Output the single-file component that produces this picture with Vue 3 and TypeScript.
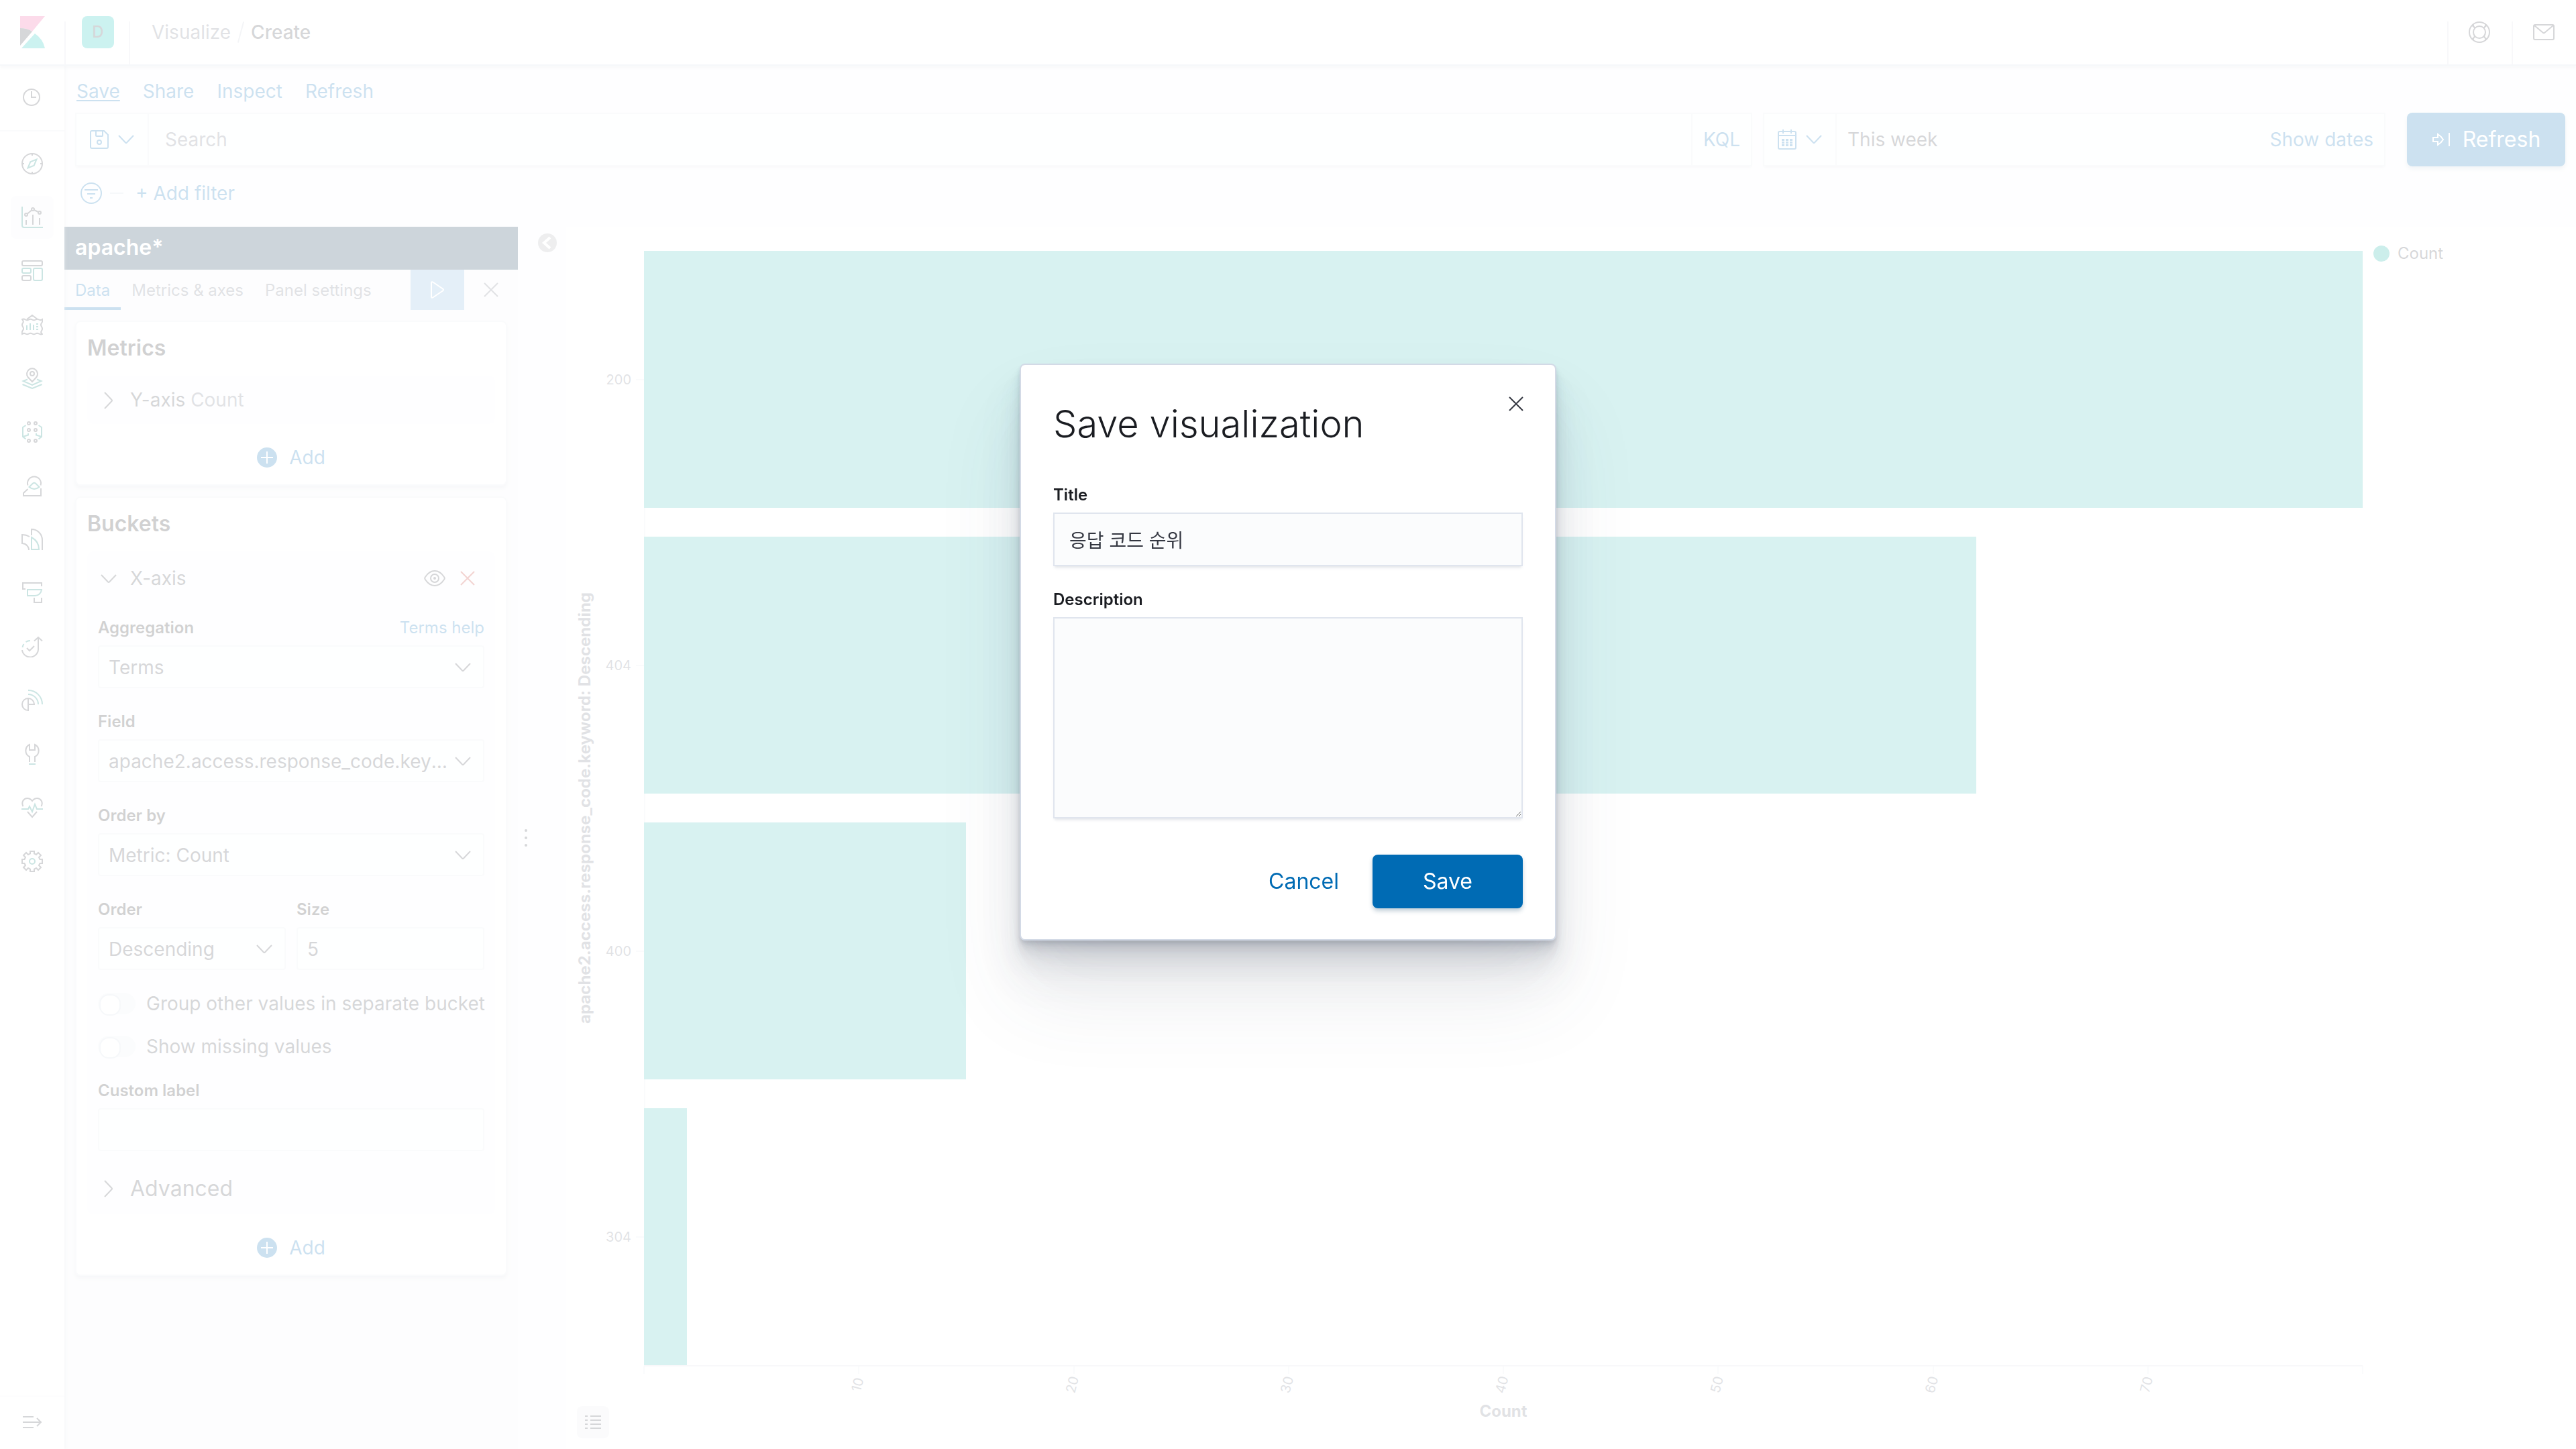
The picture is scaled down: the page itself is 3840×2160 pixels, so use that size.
<script setup lang="ts">
import { ref } from 'vue'

interface NavIcon {
  label: string
  main: string
  accent: string
}

interface Bucket {
  code: string
  count: number
}

const navItems: NavIcon[] = [
  {
    label: 'Discover',
    main: 'M16 1a15 15 0 1 0 0 30a15 15 0 1 0 0-30M16 1v3M16 28v3M1 16h3M28 16h3',
    accent: 'M9.5 22.5L13.3 13.3L22.5 9.5L18.7 18.7Z',
  },
  {
    label: 'Visualize',
    main: 'M7 20v7M17 12v15M27 17v10M9 10.5L15 5.5M19 5L25 8M7 10a2 2 0 1 0 0 4a2 2 0 1 0 0-4M17 2a2 2 0 1 0 0 4a2 2 0 1 0 0-4M27 7a2 2 0 1 0 0 4a2 2 0 1 0 0-4',
    accent: 'M1 0V28A3 3 0 0 0 4 31H32',
  },
  {
    label: 'Dashboard',
    main: 'M3 1H29A2 2 0 0 1 31 3V6A2 2 0 0 1 29 8H3A2 2 0 0 1 1 6V3A2 2 0 0 1 3 1ZM3 23H12A2 2 0 0 1 14 25V28A2 2 0 0 1 12 30H3A2 2 0 0 1 1 28V25A2 2 0 0 1 3 23Z',
    accent: 'M3 12H12A2 2 0 0 1 14 14V17A2 2 0 0 1 12 19H3A2 2 0 0 1 1 17V14A2 2 0 0 1 3 12ZM20 12H29A2 2 0 0 1 31 14V28A2 2 0 0 1 29 30H20A2 2 0 0 1 18 28V14A2 2 0 0 1 20 12Z',
  },
  {
    label: 'Canvas',
    main: 'M8 8L16 2L24 8M1 8Q3.5 7 6 8.5T11 8.5T16 8.5T21 8.5T26 8.5T31 8Q32 11 30 13.5T30 19T30 25T31 30Q28.500 31 26 29.500T21 29.500T16 29.500T11 29.500T6 29.500T1 30Q0 27 2 24.500T2 19T2 13.500T1 8Z',
    accent: 'M8 17v7M13 14v10M18 16v8M22 15h3M22 19h3M22 23h3',
  },
  {
    label: 'Maps',
    main: 'M16 21L9.500 14A8 8 0 1 1 22.500 14ZM16 6a3 3 0 1 0 0 6a3 3 0 1 0 0-6',
    accent: 'M9 17.500L2.500 20L16 26L29.500 20L23 17.500M1.500 25L16 31L30.500 25',
  },
  {
    label: 'Machine Learning',
    main: 'M11 1a2 2 0 1 0 0 4a2 2 0 1 0 0-4M21 1a2 2 0 1 0 0 4a2 2 0 1 0 0-4M11 11a2 2 0 1 0 0 4a2 2 0 1 0 0-4M21 11a2 2 0 1 0 0 4a2 2 0 1 0 0-4M11 27a2 2 0 1 0 0 4a2 2 0 1 0 0-4M21 27a2 2 0 1 0 0 4a2 2 0 1 0 0-4',
    accent: 'M6.500 6L2 9V23L6.500 26.500M2 23L10 20.500V18M25.500 6L30 9V23L25.500 26.500M30 23L22 20.500V18',
  },
  {
    label: 'Metrics',
    main: 'M9.500 15.500A10 10 0 1 1 28.500 15.500M9.500 21L3 27V31H29V20',
    accent: 'M11.500 18L17 12.500Q19 11 21 12.500L26.500 18Q19 24 11.500 18Z',
  },
  {
    label: 'Logs',
    main: 'M15 10V1A16 16 0 0 1 31 17V32M12 12Q7 9 1 9V22A10 10 0 0 1 11 32',
    accent: 'M15 13Q26 19 26 31H15Z',
  },
  {
    label: 'APM',
    main: 'M6 10H2V1H30V6M19 23V30H30V23',
    accent: 'M9 11H30A10 10 0 0 1 20 20H9Z',
  },
  {
    label: 'Uptime',
    main: 'M25 2V18A12 12 0 0 1 1 21M19 7.500L25 2L31 7.500M8 18L12 22L19 15',
    accent: 'M1.500 17A12 12 0 0 1 3.500 12M6.500 9A12 12 0 0 1 13 7',
  },
  {
    label: 'SIEM',
    main: 'M10 13A9 9 0 1 0 10 31V13A9 9 0 0 1 19 22H10',
    accent: 'M10 1A21 21 0 0 1 31 22M10 7A15 15 0 0 1 25 22',
  },
  {
    label: 'Dev Tools',
    main: 'M12 28V20A10 10 0 0 1 12 2V10H20V2A10 10 0 0 1 20 20V28',
    accent: 'M11 31H21',
  },
  {
    label: 'Stack Monitoring',
    main: 'M2.500 14C-1 7 4 2 8.500 2C12 2 14.500 4 16 6C17.500 4 20 2 23.500 2C28 2 33 7 29.500 14M9 22L16 30L23 22',
    accent: 'M0 18H10L12 14L16 22L20 11L23 18H32',
  },
  {
    label: 'Management',
    main: 'M13 1H19V4.500L22 6L25 3L29 7L26 10L27.500 13H31V19H27.500L26 22L29 25L25 29L22 26L19 27.500V31H13V27.500L10 26L7 29L3 25L6 22L4.500 19H1V13H4.500L6 10L3 7L7 3L10 6L13 4.500Z',
    accent: 'M16 12a4 4 0 1 0 0 8a4 4 0 1 0 0-8',
  },
]

const menuLinks = ['Save', 'Share', 'Inspect', 'Refresh']
const tabs = ['Data', 'Metrics & axes', 'Panel settings']

const axisMax = 80
const axisTicks = [0, 10, 20, 30, 40, 50, 60, 70, 80]
const buckets: Bucket[] = [
  { code: '200', count: 80 },
  { code: '404', count: 62 },
  { code: '400', count: 15 },
  { code: '304', count: 2 },
]

const title = ref('응답 코드 순위')
const description = ref('')
const query = ref('')
const size = ref('5')
const customLabel = ref('')
const groupOther = ref(false)
const showMissing = ref(false)
</script>

<template>
  <div class="app">
    <header class="header">
      <a class="header-logo" href="#" aria-label="Kibana home">
        <svg width="48" height="48" viewBox="0 0 48 48">
          <path fill="#f04e98" d="M6 0H43L24 23Q17 18 6 18Z" />
          <path fill="#343741" d="M6 18Q17 18 24 23L6 44Z" />
          <path fill="#00bfb3" d="M28 26Q40 34 43 48H8Z" />
        </svg>
      </a>
      <button class="header-space" type="button" aria-label="Default space"><span class="space-badge">D</span></button>
      <nav class="crumbs" aria-label="Breadcrumb">
        <a href="#">Visualize</a>
        <span class="crumb-slash"></span>
        <span class="crumb-current">Create</span>
      </nav>
      <div class="header-tools">
        <button class="header-tool" type="button" aria-label="Help">
          <svg width="32" height="32" viewBox="0 0 32 32" fill="none" stroke="#343741" stroke-width="2">
            <circle cx="16" cy="16" r="15" />
            <circle cx="16" cy="16" r="9" />
            <path d="M7 3.500Q6 7 9.500 9.500M5 6Q8 7 9 10M25 3.500Q26 7 22.500 9.500M27 6Q24 7 23 10M7 28.500Q6 25 9.500 22.500M5 26Q8 25 9 22M25 28.500Q26 25 22.500 22.500M27 26Q24 25 23 22" />
          </svg>
        </button>
        <button class="header-tool" type="button" aria-label="Newsfeed">
          <svg width="32" height="32" viewBox="0 0 32 32" fill="none" stroke="#343741" stroke-width="2">
            <rect x="1" y="5" width="30" height="22" rx="2" />
            <path d="M2 6L14.500 16.500Q16 18 17.500 16.500L30 6" />
          </svg>
        </button>
      </div>
    </header>

    <div class="body">
      <nav class="side-nav" aria-label="Applications">
        <a class="recent" href="#" aria-label="Recently viewed">
          <svg width="32" height="32" viewBox="0 0 32 32" fill="none" stroke="#343741" stroke-width="2">
            <circle cx="15" cy="15" r="12" />
            <path d="M15 6V15H22" />
          </svg>
        </a>
        <div class="nav-list">
          <a
            v-for="item in navItems"
            :key="item.label"
            class="nav-item"
            :class="{ active: item.label === 'Visualize' }"
            href="#"
            :aria-label="item.label"
          >
            <svg width="32" height="32" viewBox="0 0 32 32" fill="none" stroke-width="2">
              <path stroke="#343741" :d="item.main" />
              <path stroke="#017d73" :d="item.accent" />
            </svg>
          </a>
        </div>
        <button class="nav-expand" type="button" aria-label="Expand navigation">
          <svg width="32" height="32" viewBox="0 0 32 32" fill="none" stroke="#343741" stroke-width="2">
            <path d="M2 7H18M2 15H29M2 23H18M23 9L29 15L23 21" />
          </svg>
        </button>
      </nav>

      <main class="main">
        <nav class="menu" aria-label="Visualization menu">
          <a v-for="link in menuLinks" :key="link" href="#" :class="{ focused: link === 'Save' }">{{ link }}</a>
        </nav>

        <div class="query-row">
          <div class="search-box">
            <button class="box-prefix" type="button" aria-label="Saved queries">
              <svg width="28" height="28" viewBox="0 0 28 28" fill="none" stroke="currentColor" stroke-width="2">
                <path d="M3 1H21L27 7V25Q27 27 25 27H3Q1 27 1 25V3Q1 1 3 1ZM9 1V8Q9 9 10 9H18Q19 9 19 8V1" />
                <circle cx="14" cy="18" r="3" />
              </svg>
              <svg width="24" height="14" viewBox="0 0 24 14" fill="none" stroke="currentColor" stroke-width="2">
                <path d="M1 1L11 11.500Q12 12.500 13 11.500L23 1" />
              </svg>
            </button>
            <input v-model="query" class="search-input" type="text" placeholder="Search" aria-label="Search" />
            <button class="kql" type="button">KQL</button>
          </div>
          <div class="date-box">
            <button class="box-prefix" type="button" aria-label="Date quick select">
              <svg width="28" height="30" viewBox="0 0 28 30" fill="none" stroke="currentColor" stroke-width="2">
                <rect x="1" y="3" width="26" height="26" rx="2" />
                <path d="M1 9H27M8 0V6M20 0V6" />
                <path stroke-width="3" stroke-dasharray="4 2" d="M6 15.500H22M6 19.500H22M6 23.500H22" />
              </svg>
              <svg width="24" height="14" viewBox="0 0 24 14" fill="none" stroke="currentColor" stroke-width="2">
                <path d="M1 1L11 11.500Q12 12.500 13 11.500L23 1" />
              </svg>
            </button>
            <span class="date-text">This week</span>
            <a class="show-dates" href="#">Show dates</a>
          </div>
          <button class="refresh" type="button">
            <svg width="28" height="28" viewBox="0 0 28 28" fill="none" stroke="currentColor" stroke-width="2">
              <path d="M2 11H9V6Q14 9 17 14Q14 19 9 22V17H2ZM26 4V24" />
            </svg>
            Refresh
          </button>
        </div>

        <div class="filter-row">
          <button class="filter-icon" type="button" aria-label="Filter options">
            <svg width="32" height="32" viewBox="0 0 32 32" fill="none" stroke="currentColor" stroke-width="2">
              <circle cx="16" cy="16" r="15" />
              <path d="M6 11H26M10 17H22M14 23H18" />
            </svg>
          </button>
          <span class="filter-dash"></span>
          <a class="add-filter" href="#">+ Add filter</a>
        </div>

        <div class="editor">
          <aside class="sidebar">
            <h2 class="index-pattern">apache*</h2>
            <div class="tabs">
              <button v-for="tab in tabs" :key="tab" class="tab" :class="{ selected: tab === 'Data' }" type="button">{{ tab }}</button>
              <button class="apply" type="button" aria-label="Apply changes">
                <svg width="24" height="26" viewBox="0 0 24 26" fill="none" stroke="#fff" stroke-width="2">
                  <path d="M3 3Q3 0 6 2L20 11.500Q22 13 20 14.500L6 24Q3 26 3 23Z" />
                </svg>
              </button>
              <button class="discard" type="button" aria-label="Discard changes">
                <svg width="22" height="22" viewBox="0 0 22 22" fill="none" stroke="#69707d" stroke-width="2"><path d="M1 1L21 21M21 1L1 21" /></svg>
              </button>
            </div>

            <section class="card">
              <h3>Metrics</h3>
              <div class="agg">
                <button class="agg-head" type="button">
                  <svg width="32" height="32" viewBox="0 0 32 32" fill="none" stroke="currentColor" stroke-width="2">
                    <path d="M10 5L20.500 16Q21.500 17 20.500 18L10 29" />
                  </svg>
                  <span>Y-axis <span class="muted">Count</span></span>
                </button>
              </div>
              <button class="add" type="button">
                <svg width="30" height="30" viewBox="0 0 30 30"><circle cx="15" cy="15" r="15" fill="currentColor" /><path stroke="#fff" stroke-width="2" d="M6 15H24M15 6V24" /></svg>
                Add
              </button>
            </section>

            <section class="card">
              <h3>Buckets</h3>
              <div class="agg agg-open">
                <div class="agg-bar">
                  <button class="agg-head" type="button">
                    <svg width="32" height="32" viewBox="0 0 32 32" fill="none" stroke="currentColor" stroke-width="2">
                      <path d="M5 11L15 21.500Q16 22.500 17 21.500L27 11" />
                    </svg>
                    <span>X-axis</span>
                  </button>
                  <button class="icon-button" type="button" aria-label="Disable aggregation">
                    <svg width="32" height="26" viewBox="0 0 32 26" fill="none" stroke="#343741" stroke-width="2">
                      <path d="M2 11Q8 2 16 2T30 11Q31.500 13 30 15Q24 24 16 24T2 15Q0.500 13 2 11Z" />
                      <circle cx="16" cy="13" r="6" />
                      <circle cx="16" cy="13" r="1" />
                    </svg>
                  </button>
                  <button class="icon-button" type="button" aria-label="Remove dimension">
                    <svg width="22" height="22" viewBox="0 0 22 22" fill="none" stroke="#bd271e" stroke-width="2"><path d="M1 1L21 21M21 1L1 21" /></svg>
                  </button>
                </div>

                <div class="field">
                  <div class="field-top">
                    <label for="aggregation">Aggregation</label>
                    <a href="#">Terms help</a>
                  </div>
                  <div class="select-wrap">
                    <select id="aggregation"><option>Terms</option></select>
                    <svg class="caret" width="24" height="14" viewBox="0 0 24 14" fill="none" stroke="#343741" stroke-width="2"><path d="M1 1L11 11.500Q12 12.500 13 11.500L23 1" /></svg>
                  </div>
                </div>

                <div class="field">
                  <label for="field">Field</label>
                  <div class="select-wrap">
                    <select id="field"><option>apache2.access.response_code.keyword</option></select>
                    <svg class="caret" width="24" height="14" viewBox="0 0 24 14" fill="none" stroke="#343741" stroke-width="2"><path d="M1 1L11 11.500Q12 12.500 13 11.500L23 1" /></svg>
                  </div>
                </div>

                <div class="field">
                  <label for="order-by">Order by</label>
                  <div class="select-wrap">
                    <select id="order-by"><option>Metric: Count</option></select>
                    <svg class="caret" width="24" height="14" viewBox="0 0 24 14" fill="none" stroke="#343741" stroke-width="2"><path d="M1 1L11 11.500Q12 12.500 13 11.500L23 1" /></svg>
                  </div>
                </div>

                <div class="field-pair">
                  <div class="field">
                    <label for="order">Order</label>
                    <div class="select-wrap">
                      <select id="order"><option>Descending</option></select>
                      <svg class="caret" width="24" height="14" viewBox="0 0 24 14" fill="none" stroke="#343741" stroke-width="2"><path d="M1 1L11 11.500Q12 12.500 13 11.500L23 1" /></svg>
                    </div>
                  </div>
                  <div class="field">
                    <label for="size">Size</label>
                    <input id="size" v-model="size" class="text-field" type="text" inputmode="numeric" />
                  </div>
                </div>

                <label class="switch-row"><input v-model="groupOther" class="switch" type="checkbox" />Group other values in separate bucket</label>
                <label class="switch-row"><input v-model="showMissing" class="switch" type="checkbox" />Show missing values</label>

                <div class="field">
                  <label for="custom-label">Custom label</label>
                  <input id="custom-label" v-model="customLabel" class="text-field" type="text" />
                </div>

                <button class="agg-head advanced" type="button">
                  <svg width="32" height="32" viewBox="0 0 32 32" fill="none" stroke="currentColor" stroke-width="2">
                    <path d="M10 4L20.500 15Q21.500 16 20.500 17L10 28" />
                  </svg>
                  <span>Advanced</span>
                </button>
              </div>
              <button class="add" type="button">
                <svg width="30" height="30" viewBox="0 0 30 30"><circle cx="15" cy="15" r="15" fill="currentColor" /><path stroke="#fff" stroke-width="2" d="M6 15H24M15 6V24" /></svg>
                Add
              </button>
            </section>
          </aside>

          <div class="resizer" role="separator" aria-orientation="vertical"><i></i><i></i><i></i></div>

          <div class="collapse-col">
            <button class="collapse" type="button" aria-label="Collapse sidebar">
              <svg width="28" height="28" viewBox="0 0 28 28" fill="none"><circle cx="14" cy="14" r="14" fill="#a8abb0" /><path stroke="#fff" stroke-width="4" d="M18 6L9 14L18 22" /></svg>
            </button>
          </div>

          <section class="vis" aria-label="Chart">
            <div class="y-title"><span>apache2.access.response_code.keyword: Descending</span></div>
            <div class="y-labels">
              <div v-for="b in buckets" :key="b.code" class="y-label">{{ b.code }}<i></i></div>
            </div>
            <div class="plot">
              <div v-for="b in buckets" :key="b.code" class="bar" :style="{ width: (b.count / axisMax) * 100 + '%' }"></div>
            </div>
            <div class="legend"><i></i>Count</div>
            <div class="x-axis">
              <div class="x-ticks">
                <div v-for="t in axisTicks" :key="t" class="x-tick"><i></i><span v-if="t > 0 && t < axisMax">{{ t }}</span></div>
              </div>
              <div class="x-title">Count</div>
            </div>
            <button class="legend-toggle" type="button" aria-label="Toggle legend">
              <svg width="24" height="22" viewBox="0 0 24 22" stroke="#343741" stroke-width="2"><path d="M0 2H4M8 2H24M0 8H4M8 8H24M0 14H4M8 14H24M0 20H4M8 20H24" /></svg>
            </button>
          </section>
        </div>
      </main>
    </div>

    <div class="mask">
      <form class="modal" role="dialog" aria-modal="true" aria-labelledby="modal-title" @submit.prevent>
        <button class="modal-close" type="button" aria-label="Close">
          <svg width="22" height="22" viewBox="0 0 22 22" fill="none" stroke="#343741" stroke-width="2"><path d="M1 1L21 21M21 1L1 21" /></svg>
        </button>
        <h1 id="modal-title">Save visualization</h1>
        <div class="modal-field">
          <label for="vis-title">Title</label>
          <input id="vis-title" v-model="title" type="text" />
        </div>
        <div class="modal-field">
          <label for="vis-description">Description</label>
          <textarea id="vis-description" v-model="description"></textarea>
        </div>
        <div class="modal-footer">
          <button class="cancel" type="button">Cancel</button>
          <button class="save" type="submit">Save</button>
        </div>
      </form>
    </div>
  </div>
</template>

<style>
body {
  margin: 0;
  background: #fafbfd;
}
</style>

<style scoped>
* {
  box-sizing: border-box;
}

.app {
  display: flex;
  flex-direction: column;
  min-height: 100vh;
  color: #343741;
  font-family: Inter, "Noto Sans CJK KR", sans-serif;
  font-size: 28px;
  line-height: 42px;
}

button,
input,
select,
textarea {
  margin: 0;
  padding: 0;
  border: 0;
  background: none;
  color: inherit;
  font: inherit;
}

a {
  color: #006bb4;
  text-decoration: none;
}

svg {
  flex: none;
  display: block;
}

h1,
h2,
h3 {
  margin: 0;
}

/* Header */
.header {
  position: relative;
  z-index: 1;
  display: flex;
  height: 98px;
  background: #fff;
  border-bottom: 2px solid #d3dae6;
  box-shadow: 0 4px 4px rgba(152, 162, 179, 0.3);
}

.header-logo,
.header-space,
.header-tool {
  display: flex;
  align-items: center;
  justify-content: center;
  width: 96px;
  height: 96px;
}

.header-space,
.crumbs,
.header-tool {
  background: linear-gradient(#d9dce3, #d9dce3) 0 100% / 2px 64px no-repeat;
}

.header-space {
  padding-left: 4px;
}

.space-badge {
  width: 48px;
  border-radius: 8px;
  background: #00bfb3;
  color: #343741;
  font-size: 24px;
  font-weight: 500;
  line-height: 48px;
}

.crumbs {
  display: flex;
  align-items: center;
  padding-left: 34px;
}

.crumbs a {
  color: #69707d;
}

.crumb-slash {
  width: 2px;
  height: 32px;
  margin: 0 14px;
  background: #c5ccd8;
  transform: rotate(15deg);
}

.crumb-current {
  font-weight: 500;
}

.header-tools {
  display: flex;
  margin-left: auto;
}

/* Side navigation */
.body {
  display: flex;
  flex: 1;
}

.side-nav {
  position: relative;
  display: flex;
  flex-direction: column;
  flex: none;
  width: 96px;
  background: #fff;
  box-shadow: 2px 0 4px rgba(152, 162, 179, 0.3);
}

.recent {
  display: flex;
  align-items: center;
  justify-content: center;
  height: 98px;
  border-bottom: 2px solid #e6e9ef;
}

.nav-list {
  display: flex;
  flex: 1;
  flex-direction: column;
  gap: 16px;
  padding: 16px;
}

.nav-item {
  display: flex;
  align-items: center;
  justify-content: center;
  height: 64px;
  border-radius: 8px;
}

.nav-item.active {
  background: #f5f6f7;
}

.nav-expand {
  display: flex;
  align-items: center;
  justify-content: center;
  height: 80px;
  border-top: 2px solid #f3f4f7;
}

/* Menu and query bar */
.main {
  display: flex;
  flex: 1;
  flex-direction: column;
  min-width: 0;
}

.menu {
  display: flex;
  gap: 34px;
  padding: 17px 18px 11px;
}

.focused {
  text-decoration: underline;
  text-decoration-thickness: 2px;
  text-underline-offset: 3px;
}

.query-row {
  display: flex;
  padding: 0 16px;
}

.search-box,
.date-box {
  display: flex;
  align-items: center;
  height: 80px;
  border: 2px solid #e6e9ef;
  background: #fbfcfd;
  box-shadow: 0 4px 4px -2px rgba(152, 162, 179, 0.3);
}

.search-box {
  flex: 1;
  margin-right: 16px;
}

.date-box {
  flex: 0 0 25%;
  margin-right: 32px;
}

.box-prefix {
  display: flex;
  align-items: center;
  gap: 14px;
  height: 76px;
  padding: 0 20px;
  border-right: 2px solid #e6e9ef;
  color: #006bb4;
}

.search-input {
  flex: 1;
  height: 76px;
  padding: 0 24px;
}

.search-input::placeholder {
  color: #69707d;
  opacity: 1;
}

.kql {
  height: 76px;
  padding: 0 16px;
  border-left: 2px solid #e6e9ef;
  color: #006bb4;
}

.date-text {
  flex: 1;
  padding-left: 16px;
}

.show-dates {
  padding-right: 16px;
}

.refresh {
  display: flex;
  align-items: center;
  justify-content: center;
  gap: 18px;
  width: 236px;
  height: 80px;
  border-radius: 8px;
  background: #006bb4;
  box-shadow: 0 4px 6px rgba(54, 97, 126, 0.3);
  color: #fff;
  font-size: 32px;
}

.filter-row {
  display: flex;
  align-items: center;
  height: 90px;
  padding: 0 24px 10px;
  color: #006bb4;
}

.filter-icon {
  color: #006bb4;
}

.filter-dash {
  width: 20px;
  height: 2px;
  margin: 0 18px 0 12px;
  background: #d3dae6;
}

/* Editor sidebar */
.editor {
  display: flex;
  flex: 1;
}

.sidebar {
  flex: 0 0 676px;
  min-width: 0;
  background: #f3f4f7;
}

.index-pattern {
  padding: 0 16px;
  background: #052d4b;
  color: #fff;
  font-size: 32px;
  font-weight: 600;
  line-height: 62px;
  height: 64px;
}

.tabs {
  display: flex;
  height: 60px;
  margin-bottom: 16px;
  font-size: 24px;
}

.tab {
  padding: 0 16px;
  border-top: 6px solid transparent;
  border-bottom: 4px solid transparent;
  color: #69707d;
}

.tab.selected {
  border-bottom-color: #006bb4;
  color: #006bb4;
}

.apply {
  display: flex;
  align-items: center;
  justify-content: center;
  width: 80px;
  margin-left: auto;
  background: #78afdc;
}

.discard {
  display: flex;
  align-items: center;
  justify-content: center;
  width: 80px;
}

.card {
  margin: 0 16px 16px;
  padding: 16px;
  border: 2px solid #e6e9ef;
  border-radius: 8px;
  background: #fff;
  box-shadow: 0 4px 4px rgba(152, 162, 179, 0.3);
}

.card h3 {
  margin-bottom: 18px;
  color: #1a1c21;
  font-size: 32px;
  font-weight: 600;
  line-height: 46px;
}

.agg {
  padding: 0 16px;
  border-radius: 8px;
  background: #fbfbfc;
}

.agg-open {
  padding-bottom: 8px;
}

.agg-head {
  display: flex;
  flex: 1;
  align-items: center;
  gap: 16px;
  height: 72px;
}

.agg-bar {
  display: flex;
  align-items: center;
  gap: 22px;
  height: 80px;
  margin-bottom: 16px;
  padding-right: 14px;
}

.agg-bar .agg-head {
  height: 80px;
}

.muted {
  color: #69707d;
}

.add {
  display: flex;
  align-items: center;
  justify-content: center;
  gap: 18px;
  width: 100%;
  height: 48px;
  margin-top: 26px;
  color: #006bb4;
}

.field {
  flex: 1;
  margin-bottom: 32px;
}

.field label,
.field-top {
  display: block;
  color: #1a1c21;
  font-size: 24px;
  font-weight: 600;
  line-height: 36px;
}

.field > label,
.field-top {
  margin-bottom: 8px;
}

.field-top {
  display: flex;
  justify-content: space-between;
}

.field-top a {
  font-weight: 400;
}

.select-wrap {
  position: relative;
}

.caret {
  position: absolute;
  top: 26px;
  right: 20px;
  pointer-events: none;
}

select,
.text-field {
  display: block;
  appearance: none;
  width: 100%;
  height: 64px;
  padding: 1px 52px 0 14px;
  border: 2px solid #e6e9ef;
  border-radius: 4px;
  background: #fbfcfd;
  text-overflow: ellipsis;
  white-space: nowrap;
  overflow: hidden;
}

.text-field {
  padding-right: 14px;
}

.field-pair {
  display: flex;
  gap: 16px;
}

.field-pair .field {
  margin-bottom: 34px;
}

.switch-row {
  display: flex;
  align-items: center;
  gap: 16px;
  height: 32px;
  margin-bottom: 32px;
  white-space: nowrap;
}

.switch {
  appearance: none;
  flex: none;
  width: 56px;
  height: 32px;
  padding: 2px;
  border-radius: 16px;
  background: #e9edf3;
}

.switch::before {
  content: "";
  display: block;
  width: 28px;
  height: 28px;
  border: 2px solid #d3dae6;
  border-radius: 14px;
  background: #fff;
}

.switch:checked::before {
  margin-left: 24px;
}

.advanced {
  height: 60px;
  margin-top: -6px;
  font-size: 32px;
}

.resizer {
  display: flex;
  flex: 0 0 24px;
  flex-direction: column;
  align-items: center;
  justify-content: center;
  gap: 7px;
  background: #fafbfd;
}

.resizer i {
  width: 4px;
  height: 4px;
  border-radius: 2px;
  background: #343741;
}

.collapse-col {
  flex: 0 0 48px;
  padding: 10px 6px;
  background: #fafbfd;
}

.collapse {
  display: block;
}

/* Chart */
.vis {
  position: relative;
  display: grid;
  flex: 1;
  grid-template-columns: 56px 60px 1fr 318px;
  grid-template-rows: 1fr 125px;
  padding-top: 36px;
  background: #fff;
  color: #69707d;
  font-size: 20px;
  line-height: 24px;
}

.y-title {
  display: flex;
  align-items: center;
  justify-content: center;
  font-size: 24px;
  font-weight: 700;
}

.y-title span {
  writing-mode: vertical-rl;
  transform: rotate(180deg);
  white-space: nowrap;
}

.y-labels,
.plot {
  display: flex;
  flex-direction: column;
  gap: 43px;
}

.y-label {
  display: flex;
  flex: 1;
  align-items: center;
  justify-content: flex-end;
  gap: 7px;
}

.y-label i {
  width: 12px;
  height: 2px;
  background: #e6e9ef;
}

.plot {
  background: linear-gradient(#e6e9ef, #e6e9ef) 0 0 / 2px 100% no-repeat;
}

.bar {
  flex: 1;
  background: #3cbcba;
}

.legend {
  display: flex;
  align-items: center;
  align-self: start;
  gap: 12px;
  margin-top: -8px;
  padding-left: 16px;
  color: #343741;
  font-size: 24px;
  line-height: 24px;
}

.legend i {
  width: 24px;
  height: 24px;
  border-radius: 12px;
  background: #00aa9b;
}

.x-axis {
  grid-column: 3;
  border-top: 2px solid #d9dce3;
}

.x-ticks {
  display: flex;
  justify-content: space-between;
  height: 55px;
}

.x-tick {
  display: flex;
  flex-direction: column;
  align-items: center;
  width: 0;
}

.x-tick i {
  width: 2px;
  height: 11px;
  background: #e6e9ef;
}

.x-tick span {
  margin: 4px 4px 0 0;
  transform: rotate(-75deg);
}

.x-title {
  font-size: 24px;
  font-weight: 700;
  text-align: center;
}

.legend-toggle {
  position: absolute;
  bottom: 16px;
  left: 16px;
  display: flex;
  align-items: center;
  justify-content: center;
  width: 48px;
  height: 48px;
  border-radius: 8px;
  background: #e9ebee;
}

/* Save dialog */
.mask {
  position: fixed;
  inset: 0;
  z-index: 10;
  display: flex;
  align-items: center;
  justify-content: center;
  padding-bottom: 10vh;
  background: rgba(255, 255, 255, 0.8);
}

.modal {
  position: relative;
  width: 800px;
  max-width: 100%;
  padding: 48px 48px 46px;
  border: 2px solid #d3dae6;
  border-radius: 8px;
  background: #fff;
  box-shadow:
    0 80px 128px rgba(65, 78, 101, 0.1),
    0 48px 64px rgba(65, 78, 101, 0.1),
    0 32px 32px rgba(65, 78, 101, 0.1),
    0 16px 16px rgba(65, 78, 101, 0.1),
    0 8px 8px rgba(65, 78, 101, 0.1),
    0 4px 4px rgba(65, 78, 101, 0.1);
}

.modal-close {
  position: absolute;
  top: 47px;
  right: 47px;
}

.modal h1 {
  margin-bottom: 48px;
  color: #1a1c21;
  font-size: 56px;
  font-weight: 300;
  line-height: 80px;
}

.modal-field {
  margin-bottom: 32px;
}

.modal-field label {
  display: block;
  margin-bottom: 8px;
  color: #1a1c21;
  font-size: 24px;
  font-weight: 600;
  line-height: 36px;
}

.modal-field input,
.modal-field textarea {
  display: block;
  width: 100%;
  height: 80px;
  padding: 0 22px;
  border: 2px solid #e0e5ee;
  background: #fbfcfd;
  box-shadow: 0 4px 4px -2px rgba(152, 162, 179, 0.3);
}

.modal-field textarea {
  height: 300px;
  padding: 22px;
  resize: vertical;
}

.modal-footer {
  display: flex;
  justify-content: flex-end;
  gap: 50px;
  padding-top: 22px;
  font-size: 32px;
}

.cancel {
  color: #006bb4;
}

.save {
  width: 224px;
  height: 80px;
  border-radius: 8px;
  background: #006bb4;
  box-shadow: 0 4px 6px rgba(54, 97, 126, 0.3);
  color: #fff;
}
</style>
